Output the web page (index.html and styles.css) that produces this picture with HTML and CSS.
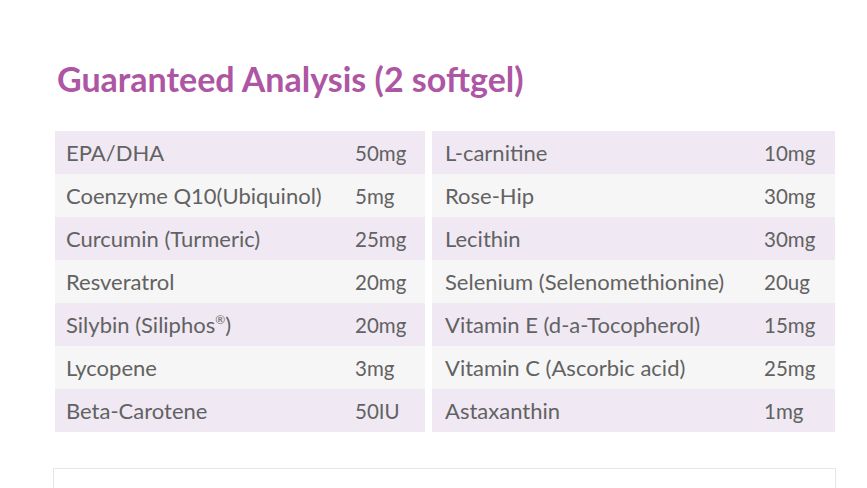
FILE: index.html
```html
<!DOCTYPE html>
<html lang="en">
<head>
<meta charset="utf-8">
<title>Guaranteed Analysis</title>
<link rel="stylesheet" href="styles.css">
</head>
<body>
<section class="analysis">
  <h2 class="analysis-title">Guaranteed Analysis (2 softgel)</h2>
  <div class="tables">
    <div class="table table-left">
      <div class="row odd"><span class="name">EPA/DHA</span><span class="val">50mg</span></div>
      <div class="row even"><span class="name">Coenzyme Q10(Ubiquinol)</span><span class="val">5mg</span></div>
      <div class="row odd"><span class="name">Curcumin (Turmeric)</span><span class="val">25mg</span></div>
      <div class="row even"><span class="name">Resveratrol</span><span class="val">20mg</span></div>
      <div class="row odd"><span class="name">Silybin (Siliphos<sup>®</sup>)</span><span class="val">20mg</span></div>
      <div class="row even"><span class="name">Lycopene</span><span class="val">3mg</span></div>
      <div class="row odd"><span class="name">Beta-Carotene</span><span class="val">50IU</span></div>
    </div>
    <div class="table table-right">
      <div class="row odd"><span class="name">L-carnitine</span><span class="val">10mg</span></div>
      <div class="row even"><span class="name">Rose-Hip</span><span class="val">30mg</span></div>
      <div class="row odd"><span class="name">Lecithin</span><span class="val">30mg</span></div>
      <div class="row even"><span class="name">Selenium (Selenomethionine)</span><span class="val">20ug</span></div>
      <div class="row odd"><span class="name">Vitamin E (d-a-Tocopherol)</span><span class="val">15mg</span></div>
      <div class="row even"><span class="name">Vitamin C (Ascorbic acid)</span><span class="val">25mg</span></div>
      <div class="row odd"><span class="name">Astaxanthin</span><span class="val">1mg</span></div>
    </div>
  </div>
  <div class="next-box"></div>
</section>
</body>
</html>
```
FILE: styles.css
```css
html, body {
  margin: 0;
  padding: 0;
  background: #ffffff;
}

body {
  font-family: Lato, "Open Sans", sans-serif;
  color: #626262;
}

.analysis {
  width: 783px;
  margin-left: 53px;
  padding-top: 57px;
}

.analysis-title {
  margin: 0 0 0 4px;
  font-size: 34px;
  line-height: 44px;
  font-weight: 700;
  color: #ad56a4;
  letter-spacing: 0;
}

.tables {
  display: flex;
  gap: 7px;
  margin: 30px 1px 0 2px;
}

.table {
  display: flex;
  flex-direction: column;
}

.table-left {
  width: 370px;
}

.table-right {
  width: 403px;
}

.row {
  display: grid;
  align-items: center;
  height: 43px;
}

.table-left .row {
  padding-left: 11px;
  grid-template-columns: 289px 70px;
}

.table-right .row {
  padding-left: 13px;
  grid-template-columns: 319px 71px;
}

.name {
  font-size: 22px;
  white-space: nowrap;
}

.val {
  font-size: 20.5px;
}

.row.odd {
  background: #f0e9f4;
}

.row.even {
  background: #f6f6f6;
}

.name sup {
  font-size: 12px;
  line-height: 0;
  vertical-align: 9px;
}

.next-box {
  margin-top: 36px;
  height: 40px;
  border: 1px solid #e6e6e6;
  border-bottom: none;
}
```
